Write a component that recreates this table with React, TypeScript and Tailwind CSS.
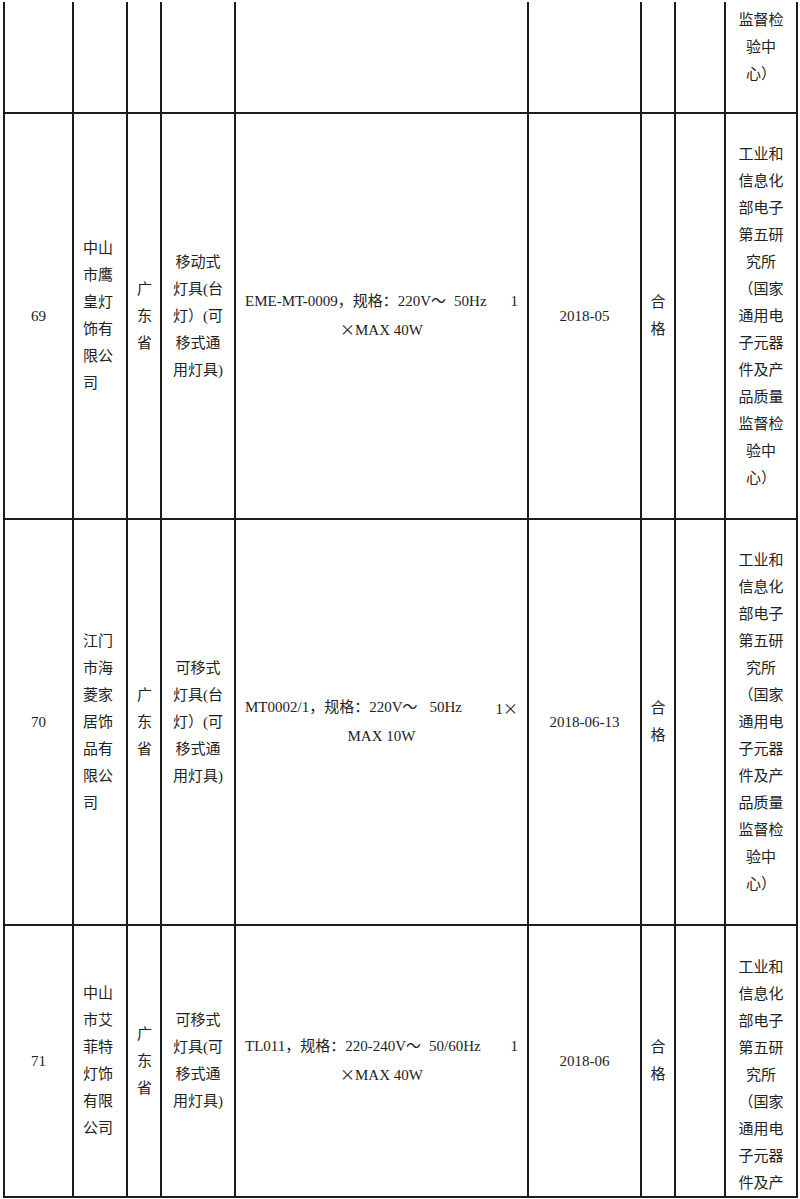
const cols =
  "grid grid-cols-[69px_54px_34px_74px_293px_113px_34px_50px_72px] border-l-2 border-[#1c1c1c]";
const cell = "border-r-2 border-b-2 border-[#1c1c1c] flex justify-center overflow-hidden";
const cjk = "[font-family:'Noto_Sans_CJK_SC',sans-serif]";

type Spec = { a: string; b: string; bGap: string; c: string; cTimes?: boolean; d: string; dTimes?: boolean };

type Row = {
  no: string;
  company: string[];
  province: string[];
  product: string[];
  spec: Spec;
  date: string;
  org: string[];
  height: string;
  orgTop?: boolean;
};

const fullOrg = [
  "工业和",
  "信息化",
  "部电子",
  "第五研",
  "究所",
  "（国家",
  "通用电",
  "子元器",
  "件及产",
  "品质量",
  "监督检",
  "验中",
  "心）",
];

const rows: Row[] = [
  {
    no: "69",
    company: ["中山", "市鹰", "皇灯", "饰有", "限公", "司"],
    province: ["广", "东", "省"],
    product: ["移动式", "灯具(台", "灯）(可", "移式通", "用灯具)"],
    spec: { a: "EME-MT-0009，规格：220V～", bGap: "ml-[8px]", b: "50Hz", c: "1", d: "MAX 40W", dTimes: true },
    date: "2018-05",
    org: fullOrg,
    height: "h-[406px]",
  },
  {
    no: "70",
    company: ["江门", "市海", "菱家", "居饰", "品有", "限公", "司"],
    province: ["广", "东", "省"],
    product: ["可移式", "灯具(台", "灯）(可", "移式通", "用灯具)"],
    spec: { a: "MT0002/1，规格：220V～", bGap: "ml-[12px]", b: "50Hz", c: "1", cTimes: true, d: "MAX 10W" },
    date: "2018-06-13",
    org: fullOrg,
    height: "h-[406px]",
  },
  {
    no: "71",
    company: ["中山", "市艾", "菲特", "灯饰", "有限", "公司"],
    province: ["广", "东", "省"],
    product: ["可移式", "灯具(可", "移式通", "用灯具)"],
    spec: { a: "TL011，规格：220-240V～", bGap: "ml-[8px]", b: "50/60Hz", c: "1", d: "MAX 40W", dTimes: true },
    date: "2018-06",
    org: fullOrg.slice(0, 9),
    height: "h-[272px]",
    orgTop: true,
  },
];

function Lines({ lines, className = "" }: { lines: string[]; className?: string }) {
  return (
    <div className={className}>
      {lines.map((l, i) => (
        <div key={i} className="whitespace-nowrap">
          {l}
        </div>
      ))}
    </div>
  );
}

function Times() {
  return <span className={`${cjk} inline-block w-[15px] text-center`}>×</span>;
}

function DataRow({ row }: { row: Row }) {
  return (
    <div className={`${cols} ${row.height}`}>
      <div className={`${cell} items-center`}>{row.no}</div>
      <div className={`${cell} items-center pr-[4px]`}>
        <Lines lines={row.company} className="text-left" />
      </div>
      <div className={`${cell} items-center pl-[1px]`}>
        <Lines lines={row.province} className="text-center" />
      </div>
      <div className={`${cell} items-center`}>
        <Lines lines={row.product} className="text-center" />
      </div>
      <div className={`${cell} items-center px-[9px]`}>
        <div className="w-full">
          <div className="flex whitespace-nowrap">
            <span>{row.spec.a}</span>
            <span className={row.spec.bGap}>{row.spec.b}</span>
            <span className="ml-auto">
              {row.spec.c}
              {row.spec.cTimes && <Times />}
            </span>
          </div>
          <div className="text-center">
            {row.spec.dTimes && <Times />}
            {row.spec.d}
          </div>
        </div>
      </div>
      <div className={`${cell} items-center`}>{row.date}</div>
      <div className={`${cell} items-center`}>
        <Lines lines={["合", "格"]} className="text-center" />
      </div>
      <div className={cell} />
      <div className={`${cell} ${row.orgTop ? "items-start pt-[28px]" : "items-center"}`}>
        <Lines lines={row.org} className="text-center" />
      </div>
    </div>
  );
}

export default function App() {
  return (
    <div className="w-[800px] h-[1199px] overflow-hidden bg-white text-[#222] text-[15px] leading-[27px] [font-family:'Liberation_Serif','Noto_Sans_CJK_SC',serif]">
      <div className="ml-[3px] w-[797px] pt-[2px]">
        {/* continuation of row 68 from the previous page */}
        <div className={`${cols} h-[112px]`}>
          <div className={cell} />
          <div className={cell} />
          <div className={cell} />
          <div className={cell} />
          <div className={cell} />
          <div className={cell} />
          <div className={cell} />
          <div className={cell} />
          <div className={`${cell} items-start pt-[5px]`}>
            <Lines lines={["监督检", "验中", "心）"]} className="text-center" />
          </div>
        </div>
        {rows.map((r) => (
          <DataRow key={r.no} row={r} />
        ))}
      </div>
    </div>
  );
}
